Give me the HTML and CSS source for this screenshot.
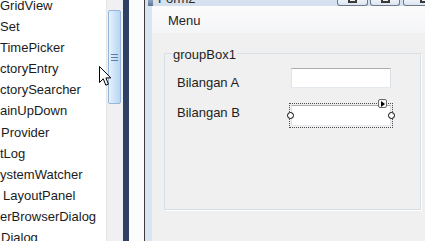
FILE: index.html
```html
<!DOCTYPE html>
<html lang="en">
<head>
  <meta charset="UTF-8" />
  <title>Form2 Designer</title>
  <link rel="stylesheet" href="styles.css">
</head>
<body>
  <div class="ide">
    <div class="toolbox">
      <ul class="tools">
        <li>GridView</li>
        <li>Set</li>
        <li>TimePicker</li>
        <li>ctoryEntry</li>
        <li>ctorySearcher</li>
        <li>ainUpDown</li>
        <li class="nudge">Provider</li>
        <li>tLog</li>
        <li>ystemWatcher</li>
        <li class="cut">LayoutPanel</li>
        <li>erBrowserDialog</li>
        <li class="nudge">Dialog</li>
      </ul>
      <div class="scrollbar">
        <div class="thumb"><span></span><span></span><span></span></div>
      </div>
    </div>

    <div class="splitter"></div>

    <div class="surface">
      <div class="form">
        <div class="titlebar">
          <span class="form-icon"></span>
          <span class="title-text">Form2</span>
          <div class="captions">
            <div class="cap min"><i></i></div>
            <div class="cap max"><i></i></div>
            <div class="cap close"><i></i></div>
          </div>
        </div>

        <div class="client">
          <div class="menustrip"><span>Menu</span></div>

          <fieldset class="groupbox">
            <legend>groupBox1</legend>
            <div class="fields">
              <label class="lbl lbl-a">Bilangan A</label>
              <div class="textbox"></div>
              <label class="lbl lbl-b">Bilangan B</label>
              <div class="textbox selected">
                <span class="handle left"></span>
                <span class="handle right"></span>
                <span class="smarttag"></span>
              </div>
            </div>
          </fieldset>
        </div>
      </div>
    </div>
  </div>

  <!-- mouse pointer -->
  <svg class="cursor" width="13" height="21" viewBox="0 0 13 21">
    <path d="M0.5 0.5 L0.5 16.5 L4.3 12.8 L6.8 19.2 L9.4 18.1 L6.9 11.9 L11.8 11.9 Z" fill="#fff" stroke="#000" stroke-width="1" stroke-linejoin="miter"/>
  </svg>
</body>
</html>
```

FILE: styles.css
```css
* { box-sizing: border-box; }

html, body {
  margin: 0;
  height: 100%;
}

body {
  overflow: hidden;
  background: #fcfcfd;
  font-family: "Liberation Sans Narrow", "Liberation Sans", Arial, sans-serif;
  font-size: 13px;
  color: #1e1e1e;
}

.ide {
  display: flex;
  height: 241px;
}

/* Toolbox */
.toolbox {
  display: flex;
  width: 123px;
  flex: none;
  background: #fff;
}

.tools {
  list-style: none;
  margin: -5px 0 0;
  padding: 0;
  width: 107px;
  border-right: 1px solid #e6e6e8;
  overflow: hidden;
}

.tools li {
  line-height: 21.1px;
  white-space: nowrap;
  color: #1b1b1b;
}

.tools li.nudge { padding-left: 1px; }
.tools li.cut { padding-left: 3px; }

.scrollbar {
  width: 16px;
  background: #f0f0f2;
  padding: 10px 2px 0 1px;
}

.thumb {
  height: 94px;
  border: 1px solid #93b6dc;
  border-radius: 2px;
  background: linear-gradient(to right, #e8f2fc, #d0e4f7 45%, #b9d6f2);
  display: flex;
  flex-direction: column;
  align-items: center;
  justify-content: center;
  gap: 2px;
}

.thumb span {
  width: 7px;
  height: 1px;
  background: #5d7fa6;
}

.splitter {
  width: 6px;
  flex: none;
  background: #2e4064;
}

/* Designer surface */
.surface {
  flex: 1;
  min-width: 0;
  display: flex;
  padding-left: 15px;
  background: #fcfcfd;
}

.form {
  flex: none;
  width: 310px;
  display: flex;
  flex-direction: column;
  border-left: 1px solid #3d3d3d;
  background: #dae5f3;
}

.titlebar {
  height: 6px;
  flex: none;
  display: flex;
  align-items: flex-end;
  overflow: hidden;
  padding: 0 8px 0 3px;
  background: #d6e1ef;
}

.form-icon {
  width: 5px;
  height: 6px;
  margin-bottom: 0;
  background: linear-gradient(#8ea3bd, #5d7390);
}

.title-text {
  margin: 0 0 1px 5px;
  line-height: 12px;
  color: #2a2a2a;
}

.captions {
  margin-left: auto;
  display: flex;
  align-self: stretch;
}

.cap {
  height: 6px;
  display: flex;
  justify-content: center;
  border: 1px solid #707b8a;
  border-top: 0;
  border-radius: 0 0 3px 3px;
  background: linear-gradient(#edf2f8, #dae4f0);
}

.cap.min { width: 31px; }
.cap.max { width: 30px; margin-left: 2px; }
.cap.close { width: 43px; margin-left: 3px; }

.cap i {
  width: 9px;
  height: 3px;
  border: 2px solid #3a3a3a;
  border-top: 0;
}

.client {
  flex: 1;
  margin-left: 7px;
  background: #f0f0f0;
}

.menustrip {
  height: 27px;
  display: flex;
  align-items: center;
  padding: 2px 0 0 16px;
  background: linear-gradient(#fbfbfc, #f4f5f7);
}

/* Group box */
.groupbox {
  margin: 12px 0 0 12px;
  padding: 0;
  width: 257px;
  height: 165px;
  min-inline-size: 0;
  border: 1px solid #d5dfe5;
  box-shadow: 1px 1px 0 #fff;
}

.groupbox legend {
  margin-left: 7px;
  padding: 3px 1px 0;
  line-height: 14px;
}

.fields {
  display: grid;
  grid-template-columns: 114px 100px;
  grid-template-rows: 20px 21px;
  row-gap: 17px;
  margin-top: 6px;
  padding-left: 12px;
}

.lbl {
  line-height: 14px;
  align-self: start;
}

.lbl-a { margin-top: 8px; }
.lbl-b { margin-top: 1px; }

.textbox {
  background: #fff;
  border: 1px solid;
  border-color: #abadb3 #dbdfe6 #e3e9ef #e2e3ea;
}

.selected {
  position: relative;
  outline: 1px dotted #4a4a4a;
  outline-offset: 1px;
}

.handle {
  position: absolute;
  top: 50%;
  width: 7px;
  height: 7px;
  margin-top: -3.5px;
  border: 1px solid #000;
  border-radius: 50%;
  background: #fff;
}

.handle.left { left: -5.5px; }
.handle.right { right: -5px; }

.smarttag {
  position: absolute;
  left: 86px;
  top: -7px;
  width: 9px;
  height: 9px;
  border: 1px solid #6a6a6a;
  border-radius: 2px;
  background: #f6f6f6;
}

.smarttag::after {
  content: "";
  position: absolute;
  left: 2px;
  top: 1px;
  border-left: 4px solid #000;
  border-top: 3px solid transparent;
  border-bottom: 3px solid transparent;
}

.cursor {
  position: absolute;
  left: 99px;
  top: 66px;
}
```
